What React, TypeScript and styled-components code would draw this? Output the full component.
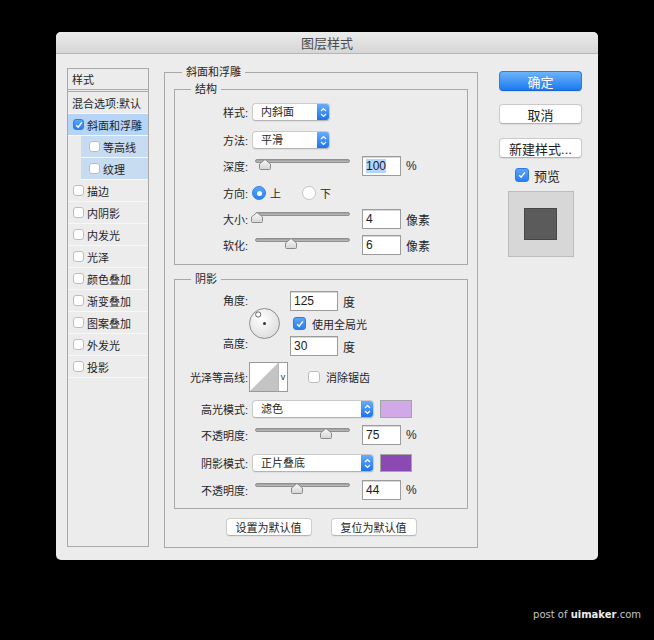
import styled, { createGlobalStyle } from "styled-components";

const GlobalStyle = createGlobalStyle`
  html, body {
    margin: 0;
    padding: 0;
    background: #000;
  }
  body {
    font-family: "Liberation Sans", "Noto Sans CJK SC", sans-serif;
    font-size: 11px;
    color: #262626;
  }
`;

const Page = styled.div`
  width: 654px;
  height: 640px;
  box-sizing: border-box;
  padding-top: 32px;
  display: flex;
  flex-direction: column;
  background: #000;
  overflow: hidden;
`;

const Dialog = styled.div`
  margin-left: 56px;
  width: 542px;
  height: 528px;
  background: #ececec;
  border-radius: 5px;
  overflow: hidden;
  display: flex;
  flex-direction: column;
`;

const TitleBar = styled.div`
  height: 21px;
  border-bottom: 1px solid #b6b6b6;
  background: linear-gradient(#ebebeb, #d6d6d6);
  display: flex;
  align-items: center;
  justify-content: center;
  font-size: 13px;
  color: #4b4b4b;
`;

const Body = styled.div`
  display: flex;
  align-items: flex-start;
  padding-left: 11px;
`;

/* ---------- left list ---------- */

const SideList = styled.div`
  margin-top: 14px;
  width: 82px;
  height: 479px;
  box-sizing: border-box;
  border: 1px solid #a9a9a9;
  background: #ececec;
`;

const ListHeader = styled.div`
  height: 20px;
  border-bottom: 3px double #a9a9a9;
  display: flex;
  align-items: center;
  padding-left: 4px;
`;

const ListRow = styled.div<{ $tone?: "selected" | "sub"; $indent?: number }>`
  height: 21px;
  border-bottom: 1px solid #f7f7f7;
  margin-left: ${(p) => (p.$tone === "sub" ? 13 : 0)}px;
  padding-left: ${(p) => p.$indent ?? 5}px;
  display: flex;
  align-items: center;
  gap: 3px;
  background: ${(p) =>
    p.$tone === "selected" ? "#b5d4f6" : p.$tone === "sub" ? "#c7dbf1" : "transparent"};
  color: #1f1f1f;
`;

const Box = styled.span<{ $on?: boolean; $size?: number }>`
  width: ${(p) => p.$size ?? 11}px;
  height: ${(p) => p.$size ?? 11}px;
  box-sizing: border-box;
  flex-shrink: 0;
  border-radius: 3px;
  border: 1px solid ${(p) => (p.$on ? "#2c7be8" : "#bdbdbd")};
  background: ${(p) => (p.$on ? "linear-gradient(#5aa4fa, #2a80f0)" : "#fff")};
  display: flex;
  align-items: center;
  justify-content: center;
`;

const Check = ({ on, size }: { on?: boolean; size?: number }) => (
  <Box $on={on} $size={size}>
    {on && (
      <svg width="8" height="8" viewBox="0 0 8 8">
        <path d="M1.2 4.2 L3.2 6.2 L6.9 1.4" fill="none" stroke="#fff" strokeWidth="1.5" />
      </svg>
    )}
  </Box>
);

/* ---------- centre groups ---------- */

const OuterGroup = styled.fieldset`
  margin: 10px 0 0 15px;
  padding: 0 0 11px;
  width: 314px;
  box-sizing: border-box;
  border: 1px solid #a8a8a8;
  min-width: 0;
`;

const Legend = styled.legend<{ $offset: number }>`
  margin-left: ${(p) => p.$offset}px;
  padding: 0 4px;
  line-height: 16px;
  font-size: 11px;
  color: #262626;
`;

const InnerGroup = styled.fieldset<{ $top: number; $bottom: number }>`
  margin: ${(p) => p.$top}px 0 0 9px;
  padding: 0 0 ${(p) => p.$bottom}px;
  width: 294px;
  box-sizing: border-box;
  border: 1px solid #a8a8a8;
  min-width: 0;
`;

const Row = styled.div<{ $top: number; $h?: number }>`
  display: flex;
  align-items: center;
  height: ${(p) => p.$h ?? 20}px;
  margin-top: ${(p) => p.$top}px;
`;

const Label = styled.span`
  width: 73px;
  flex-shrink: 0;
  text-align: right;
  white-space: nowrap;
  margin-right: 4px;
`;

const Select = styled.div<{ $w: number }>`
  width: ${(p) => p.$w}px;
  height: 18px;
  box-sizing: border-box;
  display: flex;
  border-radius: 4px;
  background: #fff;
  border: 1px solid #cacaca;
  border-bottom-color: #b4b4b4;
  box-shadow: 0 1px 1px rgba(0, 0, 0, 0.06);
  overflow: hidden;
`;

const SelectText = styled.span`
  flex: 1;
  padding-left: 8px;
  line-height: 16px;
`;

const Stepper = styled.span`
  width: 12px;
  background: linear-gradient(#67abfb, #1c74ec);
  display: flex;
  align-items: center;
  justify-content: center;
`;

const Dropdown = ({ w, text }: { w: number; text: string }) => (
  <Select $w={w}>
    <SelectText>{text}</SelectText>
    <Stepper>
      <svg width="7" height="11" viewBox="0 0 7 11">
        <path d="M1 4 L3.5 1.5 L6 4 M1 7 L3.5 9.5 L6 7" fill="none" stroke="#fff" strokeWidth="1.2" />
      </svg>
    </Stepper>
  </Select>
);

const SliderBox = styled.div`
  position: relative;
  width: 110px;
  height: 20px;
  flex-shrink: 0;
`;

const Track = styled.div`
  position: absolute;
  left: 3px;
  top: 3px;
  width: 95px;
  height: 4px;
  box-sizing: border-box;
  border-radius: 2px;
  background: linear-gradient(#9c9c9c, #bdbdbd);
  border: 1px solid #909090;
`;

const Thumb = styled.svg`
  position: absolute;
  top: 3px;
  margin-left: -6px;
`;

const Slider = ({ pct }: { pct: number }) => (
  <SliderBox>
    <Track />
    <Thumb width="12" height="11" viewBox="0 0 12 11" style={{ left: 3 + (pct / 100) * 95 }}>
      <defs>
        <linearGradient id="tg" x1="0" y1="0" x2="0" y2="1">
          <stop offset="0" stopColor="#fafafa" />
          <stop offset="1" stopColor="#d4d4d4" />
        </linearGradient>
      </defs>
      <path d="M6 0.5 L11.5 5 L11.5 9.5 Q11.5 10.5 10.5 10.5 L1.5 10.5 Q0.5 10.5 0.5 9.5 L0.5 5 Z" fill="url(#tg)" stroke="#8a8a8a" />
    </Thumb>
  </SliderBox>
);

const Field = styled.div<{ $w: number }>`
  width: ${(p) => p.$w}px;
  height: 20px;
  box-sizing: border-box;
  border: 1px solid #9c9c9c;
  box-shadow: inset 0 1px 0 #d8d8d8;
  background: #fff;
  padding-left: 3px;
  display: flex;
  align-items: center;
  font-size: 12px;
  color: #1a1a1a;
  flex-shrink: 0;
`;

const Selected = styled.span`
  background: #b4d6fe;
`;

const Unit = styled.span`
  margin-left: 5px;
  font-size: 12px;
`;

const RadioDot = styled.span<{ $on?: boolean }>`
  width: 14px;
  height: 14px;
  box-sizing: border-box;
  border-radius: 50%;
  border: 1px solid ${(p) => (p.$on ? "#2a7de9" : "#c4c4c4")};
  background: ${(p) => (p.$on ? "linear-gradient(#5ba5fa, #2a80f0)" : "#fff")};
  display: flex;
  align-items: center;
  justify-content: center;
  &::after {
    content: "";
    width: 5px;
    height: 5px;
    border-radius: 50%;
    background: ${(p) => (p.$on ? "#fff" : "transparent")};
  }
`;

const RadioItem = styled.span<{ $gap: number }>`
  display: flex;
  align-items: center;
  gap: 4px;
  margin-right: ${(p) => p.$gap}px;
`;

/* ---------- shadow section ---------- */

const AngleGrid = styled.div`
  display: grid;
  grid-template-columns: 73px 42px auto;
  grid-template-rows: 20px 25px 20px;
  align-items: center;
  margin-top: 4px;
`;

const GridLabel = styled.span<{ $row: number }>`
  grid-column: 1;
  grid-row: ${(p) => p.$row};
  text-align: right;
  margin-top: ${(p) => (p.$row === 3 ? -6 : -2)}px;
`;

const DialCell = styled.div`
  grid-column: 2;
  grid-row: 1 / 4;
  margin-left: 1px;
  display: flex;
`;

const FieldCell = styled.div<{ $row: number }>`
  grid-column: 3;
  grid-row: ${(p) => p.$row};
  display: flex;
  align-items: center;
`;

const CheckLabel = styled.span<{ $left: number }>`
  display: flex;
  align-items: center;
  gap: 6px;
  margin-left: ${(p) => p.$left}px;
`;

const Contour = styled.div`
  display: flex;
  height: 30px;
  box-sizing: border-box;
  border: 1px solid #9a9a9a;
  background: #fff;
  margin-left: -3px;
`;

const ContourArrow = styled.span`
  width: 8px;
  border-left: 1px solid #b8b8b8;
  display: flex;
  align-items: center;
  justify-content: center;
  font-size: 9px;
  color: #333;
`;

const Swatch = styled.span<{ $color: string }>`
  width: 32px;
  height: 18px;
  box-sizing: border-box;
  margin-left: 6px;
  border: 1px solid #a5a5a5;
  background: ${(p) => p.$color};
`;

const DefaultButtons = styled.div`
  display: flex;
  justify-content: center;
  gap: 19px;
  margin-top: 9px;
`;

const SmallButton = styled.div`
  width: 86px;
  height: 18px;
  box-sizing: border-box;
  border-radius: 4px;
  background: #fff;
  border: 1px solid #cdcdcd;
  border-bottom-color: #b5b5b5;
  box-shadow: 0 1px 1px rgba(0, 0, 0, 0.05);
  display: flex;
  align-items: center;
  justify-content: center;
  font-size: 11px;
`;

/* ---------- right column ---------- */

const SideActions = styled.div`
  margin: 17px 0 0 21px;
  width: 83px;
  display: flex;
  flex-direction: column;
  align-items: center;
`;

const ActionButton = styled.div<{ $primary?: boolean; $top: number }>`
  width: 83px;
  height: 20px;
  box-sizing: border-box;
  margin-top: ${(p) => p.$top}px;
  border-radius: 4px;
  display: flex;
  align-items: center;
  justify-content: center;
  font-size: 13px;
  color: ${(p) => (p.$primary ? "#fff" : "#222")};
  background: ${(p) => (p.$primary ? "linear-gradient(#6db4fb, #1b7af0)" : "#fff")};
  border: 1px solid ${(p) => (p.$primary ? "#2a7ce6" : "#cacaca")};
  border-bottom-color: ${(p) => (p.$primary ? "#1b63d0" : "#b3b3b3")};
  box-shadow: 0 1px 1px rgba(0, 0, 0, 0.07);
`;

const PreviewToggle = styled.div`
  display: flex;
  align-items: center;
  gap: 5px;
  margin: 9px 6px 0 0;
  height: 16px;
  font-size: 13px;
`;

const PreviewBox = styled.div`
  width: 66px;
  height: 66px;
  box-sizing: border-box;
  margin-top: 8px;
  border: 1px solid #bdbdbd;
  background: #d7d7d7;
  display: flex;
  align-items: center;
  justify-content: center;
`;

const PreviewSquare = styled.div`
  width: 33px;
  height: 32px;
  box-sizing: border-box;
  border: 1px solid #474747;
  background: #5b5b5b;
`;

const Footer = styled.div`
  margin-top: 48px;
  padding-right: 13px;
  text-align: right;
  font-family: "DejaVu Sans", sans-serif;
  font-size: 10px;
  line-height: 14px;
  color: #c4c4c4;
  b {
    color: #ececec;
  }
`;

const listItems = ["描边", "内阴影", "内发光", "光泽", "颜色叠加", "渐变叠加", "图案叠加", "外发光", "投影"];

const Dial = () => {
  const a = (125 * Math.PI) / 180;
  const cx = 15.5 + Math.cos(a) * 11;
  const cy = 15.5 - Math.sin(a) * 11;
  return (
    <svg width="31" height="31" viewBox="0 0 31 31">
      <defs>
        <radialGradient id="dg" cx="0.4" cy="0.35" r="0.7">
          <stop offset="0" stopColor="#ffffff" />
          <stop offset="1" stopColor="#dcdcdc" />
        </radialGradient>
      </defs>
      <circle cx="15.5" cy="15.5" r="15" fill="url(#dg)" stroke="#8e8e8e" />
      <circle cx={cx} cy={cy} r="2.6" fill="#fff" stroke="#555" strokeWidth="0.9" />
      <circle cx="15.5" cy="15.5" r="1.5" fill="#333" />
    </svg>
  );
};

export default function App() {
  return (
    <>
      <GlobalStyle />
      <Page>
        <Dialog>
          <TitleBar>图层样式</TitleBar>
          <Body>
            <SideList>
              <ListHeader>样式</ListHeader>
              <ListRow $indent={4}>混合选项:默认</ListRow>
              <ListRow $tone="selected">
                <Check on />
                斜面和浮雕
              </ListRow>
              <ListRow $tone="sub" $indent={8}>
                <Check />
                等高线
              </ListRow>
              <ListRow $tone="sub" $indent={8}>
                <Check />
                纹理
              </ListRow>
              {listItems.map((t) => (
                <ListRow key={t}>
                  <Check />
                  {t}
                </ListRow>
              ))}
            </SideList>

            <OuterGroup>
              <Legend $offset={17}>斜面和浮雕</Legend>

              <InnerGroup $top={1} $bottom={9}>
                <Legend $offset={16}>结构</Legend>
                <Row $top={5}>
                  <Label>样式:</Label>
                  <Dropdown w={78} text="内斜面" />
                </Row>
                <Row $top={8}>
                  <Label>方法:</Label>
                  <Dropdown w={78} text="平滑" />
                </Row>
                <Row $top={6}>
                  <Label>深度:</Label>
                  <Slider pct={10} />
                  <Field $w={39}>
                    <Selected>100</Selected>
                  </Field>
                  <Unit>%</Unit>
                </Row>
                <Row $top={7}>
                  <Label>方向:</Label>
                  <RadioItem $gap={21}>
                    <RadioDot $on />上
                  </RadioItem>
                  <RadioItem $gap={0}>
                    <RadioDot />下
                  </RadioItem>
                </Row>
                <Row $top={6}>
                  <Label>大小:</Label>
                  <Slider pct={1.6} />
                  <Field $w={39}>4</Field>
                  <Unit>像素</Unit>
                </Row>
                <Row $top={6}>
                  <Label>软化:</Label>
                  <Slider pct={37.5} />
                  <Field $w={39}>6</Field>
                  <Unit>像素</Unit>
                </Row>
              </InnerGroup>

              <InnerGroup $top={6} $bottom={8}>
                <Legend $offset={16}>阴影</Legend>
                <AngleGrid>
                  <GridLabel $row={1}>角度:</GridLabel>
                  <DialCell>
                    <Dial />
                  </DialCell>
                  <FieldCell $row={1}>
                    <Field $w={48}>125</Field>
                    <Unit>度</Unit>
                  </FieldCell>
                  <FieldCell $row={2}>
                    <CheckLabel $left={3}>
                      <Check on size={13} />
                      使用全局光
                    </CheckLabel>
                  </FieldCell>
                  <GridLabel $row={3}>高度:</GridLabel>
                  <FieldCell $row={3}>
                    <Field $w={48}>30</Field>
                    <Unit>度</Unit>
                  </FieldCell>
                </AngleGrid>
                <Row $top={6} $h={30}>
                  <Label>光泽等高线:</Label>
                  <Contour>
                    <svg width="28" height="28" viewBox="0 0 28 28">
                      <polygon points="0,28 28,0 28,28" fill="#c4c4c4" />
                    </svg>
                    <ContourArrow>v</ContourArrow>
                  </Contour>
                  <CheckLabel $left={20}>
                    <Check size={12} />
                    消除锯齿
                  </CheckLabel>
                </Row>
                <Row $top={7}>
                  <Label>高光模式:</Label>
                  <Dropdown w={122} text="滤色" />
                  <Swatch $color="#d1a9e9" />
                </Row>
                <Row $top={6}>
                  <Label>不透明度:</Label>
                  <Slider pct={75} />
                  <Field $w={39}>75</Field>
                  <Unit>%</Unit>
                </Row>
                <Row $top={8}>
                  <Label>阴影模式:</Label>
                  <Dropdown w={122} text="正片叠底" />
                  <Swatch $color="#8a4ab1" />
                </Row>
                <Row $top={7}>
                  <Label>不透明度:</Label>
                  <Slider pct={44} />
                  <Field $w={39}>44</Field>
                  <Unit>%</Unit>
                </Row>
              </InnerGroup>

              <DefaultButtons>
                <SmallButton>设置为默认值</SmallButton>
                <SmallButton>复位为默认值</SmallButton>
              </DefaultButtons>
            </OuterGroup>

            <SideActions>
              <ActionButton $primary $top={0}>确定</ActionButton>
              <ActionButton $top={13}>取消</ActionButton>
              <ActionButton $top={14}>新建样式...</ActionButton>
              <PreviewToggle>
                <Check on size={14} />
                预览
              </PreviewToggle>
              <PreviewBox>
                <PreviewSquare />
              </PreviewBox>
            </SideActions>
          </Body>
        </Dialog>
        <Footer>
          post of <b>uimaker</b>.com
        </Footer>
      </Page>
    </>
  );
}
